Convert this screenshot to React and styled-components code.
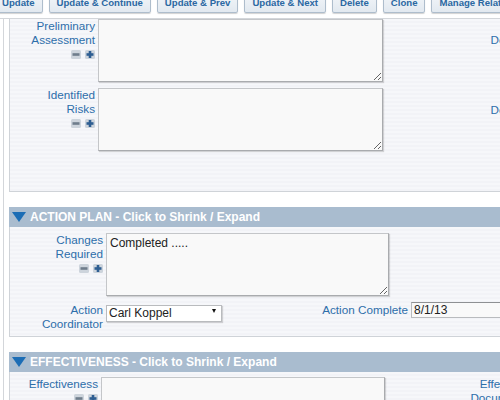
import React from "react";
import styled, { createGlobalStyle } from "styled-components";

const GlobalStyle = createGlobalStyle`
  html, body {
    margin: 0;
    padding: 0;
    background: #ffffff;
    overflow: hidden;
  }
  body {
    font-family: "Liberation Sans", Arial, sans-serif;
  }
`;

const Page = styled.div`
  width: 600px;
`;

const Toolbar = styled.div`
  display: flex;
  gap: 6px;
  height: 21px;
  margin: -8px 0 5px -6px;
`;

const ToolButton = styled.button`
  height: 21px;
  padding: 0 7px;
  border: 1px solid #aebdcc;
  border-radius: 2px;
  background: linear-gradient(#f3f6f9, #e2e9f0);
  box-shadow: 0 1px 1px rgba(0, 0, 0, 0.18);
  color: #2b68a2;
  font-family: "Liberation Sans", Arial, sans-serif;
  font-size: 9.6px;
  font-weight: bold;
  white-space: nowrap;
`;

const Content = styled.div`
  border-top: 1px solid #d3d6da;
  padding-left: 3px;
`;

const Inner = styled.div`
  border-left: 1px solid #d3d6da;
  padding-left: 5px;
  min-height: 400px;
`;

const Panel = styled.div`
  display: flex;
  flex-direction: column;
  gap: ${(p) => p.$gap}px;
  padding: ${(p) => p.$top}px 0 ${(p) => p.$bottom}px 0;
  border-left: 1px solid #cfd3d8;
  border-bottom: 1px solid #cfd3d8;
  background: repeating-linear-gradient(#f6f7fa 0 2px, #f2f3f7 2px 4px);
  margin-bottom: 15px;
`;

const SectionHeader = styled.div`
  display: flex;
  align-items: center;
  gap: 4px;
  height: 20px;
  padding-left: 3px;
  background: #a9bccf;
  color: #ffffff;
  font-size: 12px;
  font-weight: bold;
  white-space: nowrap;
`;

const Row = styled.div`
  display: flex;
  align-items: flex-start;
  gap: 3px;
`;

const Label = styled.div`
  width: ${(p) => p.$w}px;
  flex-shrink: 0;
  padding-top: ${(p) => p.$offset || 0}px;
  text-align: right;
  color: #2d6eaa;
  font-size: 11.7px;
  line-height: 14px;
  white-space: nowrap;
`;

const Toggles = styled.div`
  display: flex;
  justify-content: flex-end;
  gap: 4px;
  margin-top: 3px;
`;

const Area = styled.textarea`
  width: ${(p) => p.$w}px;
  height: 63px;
  flex-shrink: 0;
  box-sizing: border-box;
  margin: 0;
  padding: 2px 3px;
  border: 1px solid #c4c6c9;
  border-right-color: #a9abae;
  border-bottom-color: #a9abae;
  box-shadow: 1px 1px 1px rgba(0, 0, 0, 0.15);
  background: #f9f9f9;
  color: #222;
  font-family: "Liberation Sans", Arial, sans-serif;
  font-size: 12px;
  line-height: 14px;
`;

const SelectWrap = styled.div`
  position: relative;
  width: 116px;
  height: 17px;
  flex-shrink: 0;
`;

const Select = styled.select`
  appearance: none;
  width: 116px;
  height: 17px;
  margin: 0;
  padding: 0 0 0 2px;
  box-sizing: border-box;
  border: 1px solid #b9bbbe;
  box-shadow: 1px 1px 1px rgba(0, 0, 0, 0.15);
  background: #ffffff;
  color: #222;
  font-family: "Liberation Sans", Arial, sans-serif;
  font-size: 12px;
`;

const Caret = styled.span`
  position: absolute;
  right: 6px;
  top: 6px;
  width: 0;
  height: 0;
  border-left: 2px solid transparent;
  border-right: 2px solid transparent;
  border-top: 4px solid #111;
  pointer-events: none;
`;

const Input = styled.input`
  width: 120px;
  height: 16px;
  margin: -1px 0 0 0;
  padding: 0 2px;
  box-sizing: border-box;
  border: 1px solid #b9bbbe;
  border-top-color: #8e9093;
  background: #f9f9f9;
  color: #222;
  font-family: "Liberation Sans", Arial, sans-serif;
  font-size: 12px;
`;

const Minus = () => (
  <svg width="10" height="9" viewBox="0 0 10 9">
    <rect x="0" y="0" width="10" height="9" rx="1.5" fill="#cdd4dc" />
    <rect x="1.5" y="3.2" width="7" height="2.6" fill="#6f7d8c" />
  </svg>
);

const Plus = () => (
  <svg width="10" height="9" viewBox="0 0 10 9">
    <rect x="0" y="0" width="10" height="9" rx="1.5" fill="#cdd4dc" />
    <rect x="1.5" y="3.2" width="7" height="2.6" fill="#2e5e92" />
    <rect x="3.7" y="1" width="2.6" height="7" fill="#2e5e92" />
  </svg>
);

const Triangle = () => (
  <svg width="14" height="10" viewBox="0 0 14 10">
    <polygon points="0,0 14,0 7,10" fill="#1c6db5" />
  </svg>
);

const FieldLabel = ({ w, lines, toggles }) => (
  <Label $w={w}>
    {lines.map((l) => (
      <div key={l}>{l}</div>
    ))}
    {toggles && (
      <Toggles>
        <Minus />
        <Plus />
      </Toggles>
    )}
  </Label>
);

const buttons = [
  "Update",
  "Update & Continue",
  "Update & Prev",
  "Update & Next",
  "Delete",
  "Clone",
  "Manage Relationships",
];

export default function App() {
  return (
    <Page>
      <GlobalStyle />
      <Toolbar>
        {buttons.map((b) => (
          <ToolButton key={b}>{b}</ToolButton>
        ))}
      </Toolbar>
      <Content>
        <Inner>
          <Panel $top={0} $bottom={40} $gap={6}>
            <Row>
              <FieldLabel w={85} lines={["Preliminary", "Assessment"]} toggles />
              <Area $w={285} defaultValue="" />
              <Label $w={163} $offset={14}>
                Description
              </Label>
            </Row>
            <Row>
              <FieldLabel w={85} lines={["Identified", "Risks"]} toggles />
              <Area $w={285} defaultValue="" />
              <Label $w={163} $offset={15}>
                Description
              </Label>
            </Row>
          </Panel>

          <SectionHeader>
            <Triangle />
            ACTION PLAN - Click to Shrink / Expand
          </SectionHeader>
          <Panel $top={6} $bottom={5} $gap={7}>
            <Row>
              <FieldLabel w={93} lines={["Changes", "Required"]} toggles />
              <Area $w={283} defaultValue="Completed ....." />
            </Row>
            <Row>
              <FieldLabel w={93} lines={["Action", "Coordinator"]} />
              <SelectWrap>
                <Select defaultValue="Carl Koppel">
                  <option>Carl Koppel</option>
                </Select>
                <Caret />
              </SelectWrap>
              <Label $w={183}>Action Complete</Label>
              <Input defaultValue="8/1/13" />
            </Row>
          </Panel>

          <SectionHeader>
            <Triangle />
            EFFECTIVENESS - Click to Shrink / Expand
          </SectionHeader>
          <Panel $top={5} $bottom={20} $gap={6}>
            <Row>
              <FieldLabel w={88} lines={["Effectiveness"]} toggles />
              <Area $w={284} defaultValue="" />
              <Label $w={161}>
                <div>Effectiveness</div>
                <div>Documentation</div>
              </Label>
            </Row>
          </Panel>
        </Inner>
      </Content>
    </Page>
  );
}
